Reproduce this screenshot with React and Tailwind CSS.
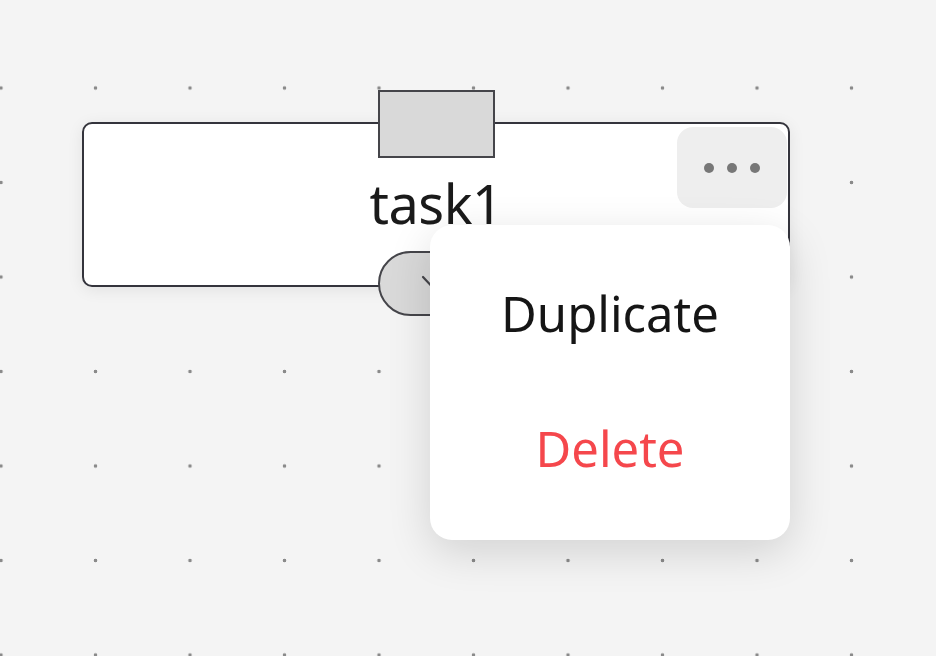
import React from 'react';

const Canvas = ({ children }) => (
  <div className="relative w-[936px] h-[656px] overflow-hidden bg-[#f4f4f4] bg-[radial-gradient(circle,#8a8a8a_1.5px,transparent_2.1px)] bg-[length:94.5px_94.5px] bg-[position:-46.25px_40.75px]">
    {children}
  </div>
);

const TaskNode = ({ label }) => (
  <div className="absolute left-[82px] top-[122px] w-[708px] h-[165px] rounded-[10px] border-2 border-[#34343c] bg-white shadow-[0_3px_16px_rgba(0,0,0,0.08)] flex items-center justify-center">
    {/* target handle */}
    <div className="absolute left-[294px] top-[-34px] w-[117px] h-[68px] bg-[#d9d9d9] border-2 border-[#45454a]" />
    <span className="text-[54px] leading-none text-[#1a1a1a] tracking-[-0.5px] pb-[4px]">{label}</span>
    <button className="absolute right-[1px] top-[3px] w-[110px] h-[81px] rounded-[16px] bg-[#eeeeee] flex items-center justify-center gap-[13px]">
      <span className="w-[10px] h-[10px] rounded-full bg-[#777]" />
      <span className="w-[10px] h-[10px] rounded-full bg-[#777]" />
      <span className="w-[10px] h-[10px] rounded-full bg-[#777]" />
    </button>
    {/* source handle */}
    <div className="absolute left-[294px] top-[127px] w-[117px] h-[65px] rounded-full bg-[#d9d9d9] border-2 border-[#45454a] flex items-center justify-center">
      <svg width="34" height="22" viewBox="0 0 34 22" fill="none" stroke="#45454a" strokeWidth="2.2" strokeLinecap="round">
        <path d="M3 4 L17 19 L31 4" />
      </svg>
    </div>
  </div>
);

const NodeMenu = () => (
  <div className="absolute left-[430px] top-[225px] w-[360px] h-[315px] rounded-[22px] bg-white shadow-[0_12px_44px_rgba(0,0,0,0.14)] flex flex-col items-center pt-[64px] gap-[86px]">
    <button className="text-[49px] leading-none text-[#151515]">Duplicate</button>
    <button className="text-[49px] leading-none text-[#f5474c]">Delete</button>
  </div>
);

export default function App() {
  return (
    <div className="font-['Noto_Sans',sans-serif]">
      <Canvas>
        <TaskNode label="task1" />
        <NodeMenu />
      </Canvas>
    </div>
  );
}
